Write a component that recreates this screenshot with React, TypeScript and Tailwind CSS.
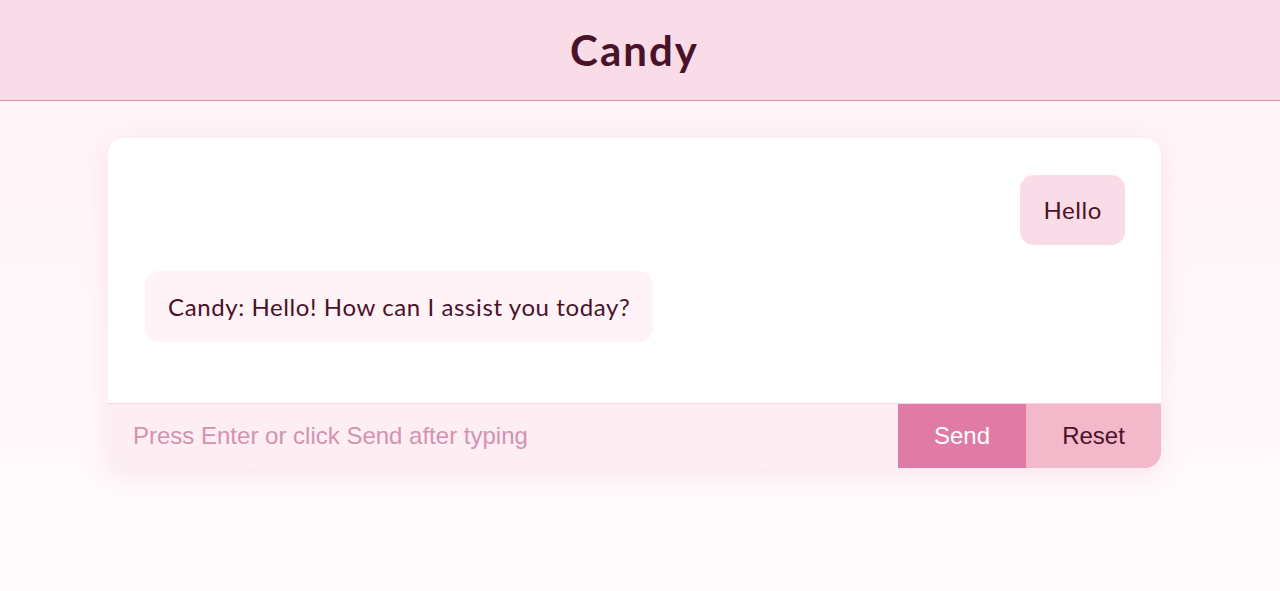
import { useState } from 'react'

type Msg = { from: 'user' | 'bot'; text: string }

const initial: Msg[] = [
  { from: 'user', text: 'Hello' },
  { from: 'bot', text: 'Candy: Hello! How can I assist you today?' },
]

export default function App() {
  const [messages, setMessages] = useState<Msg[]>(initial)
  const [draft, setDraft] = useState('')

  const send = () => {
    if (!draft.trim()) return
    setMessages(m => [...m, { from: 'user', text: draft }])
    setDraft('')
  }

  return (
    <div className="min-h-[591px] bg-gradient-to-b from-[#fff2f7] to-[#fffbfc] font-['Lato',sans-serif] text-[#4a1228]">
      {/* Header */}
      <header className="h-[101px] bg-[#f9dce7] border-b border-[#e38aae] flex items-center justify-center pr-[11px]">
        <h1 className="text-[42px] font-bold tracking-[2px] text-[#4a1228]">Candy</h1>
      </header>

      {/* Chat card */}
      <main className="pt-[37px] pl-[108px]">
        <div className="w-[1053px] rounded-2xl bg-white shadow-[0_6px_24px_rgba(236,160,190,0.22)] overflow-hidden">
          <div className="h-[265px] px-[36px] pt-[37px] flex flex-col gap-[26px]">
            {messages.map((m, i) => (
              <div key={i} className={m.from === 'user' ? 'flex justify-end' : 'flex justify-start pl-px'}>
                <div
                  className={
                    m.from === 'user'
                      ? 'bg-[#f9dce7] rounded-[14px] px-[23px] py-[20px] text-[24px] leading-[30px] tracking-[0.6px]'
                      : 'bg-[#fff3f7] rounded-[14px] px-[23px] py-[20px] text-[24px] leading-[31px] tracking-[0.6px]'
                  }
                >
                  {m.text}
                </div>
              </div>
            ))}
          </div>

          {/* Input row */}
          <div className="flex h-[65px] border-t border-[#f6d6e2] bg-[#fdeef4] font-['Liberation_Sans',Arial,sans-serif]">
            <input
              value={draft}
              onChange={e => setDraft(e.target.value)}
              onKeyDown={e => e.key === 'Enter' && send()}
              placeholder="Press Enter or click Send after typing"
              className="flex-1 bg-transparent pl-[25px] text-[24px] outline-none placeholder:text-[#d492b0]"
            />
            <button onClick={send} className="w-[128px] bg-[#e07ba5] text-white text-[24px]">
              Send
            </button>
            <button onClick={() => setMessages(initial)} className="w-[135px] bg-[#f4b8cb] text-[#4a1228] text-[24px]">
              Reset
            </button>
          </div>
        </div>
      </main>
    </div>
  )
}
